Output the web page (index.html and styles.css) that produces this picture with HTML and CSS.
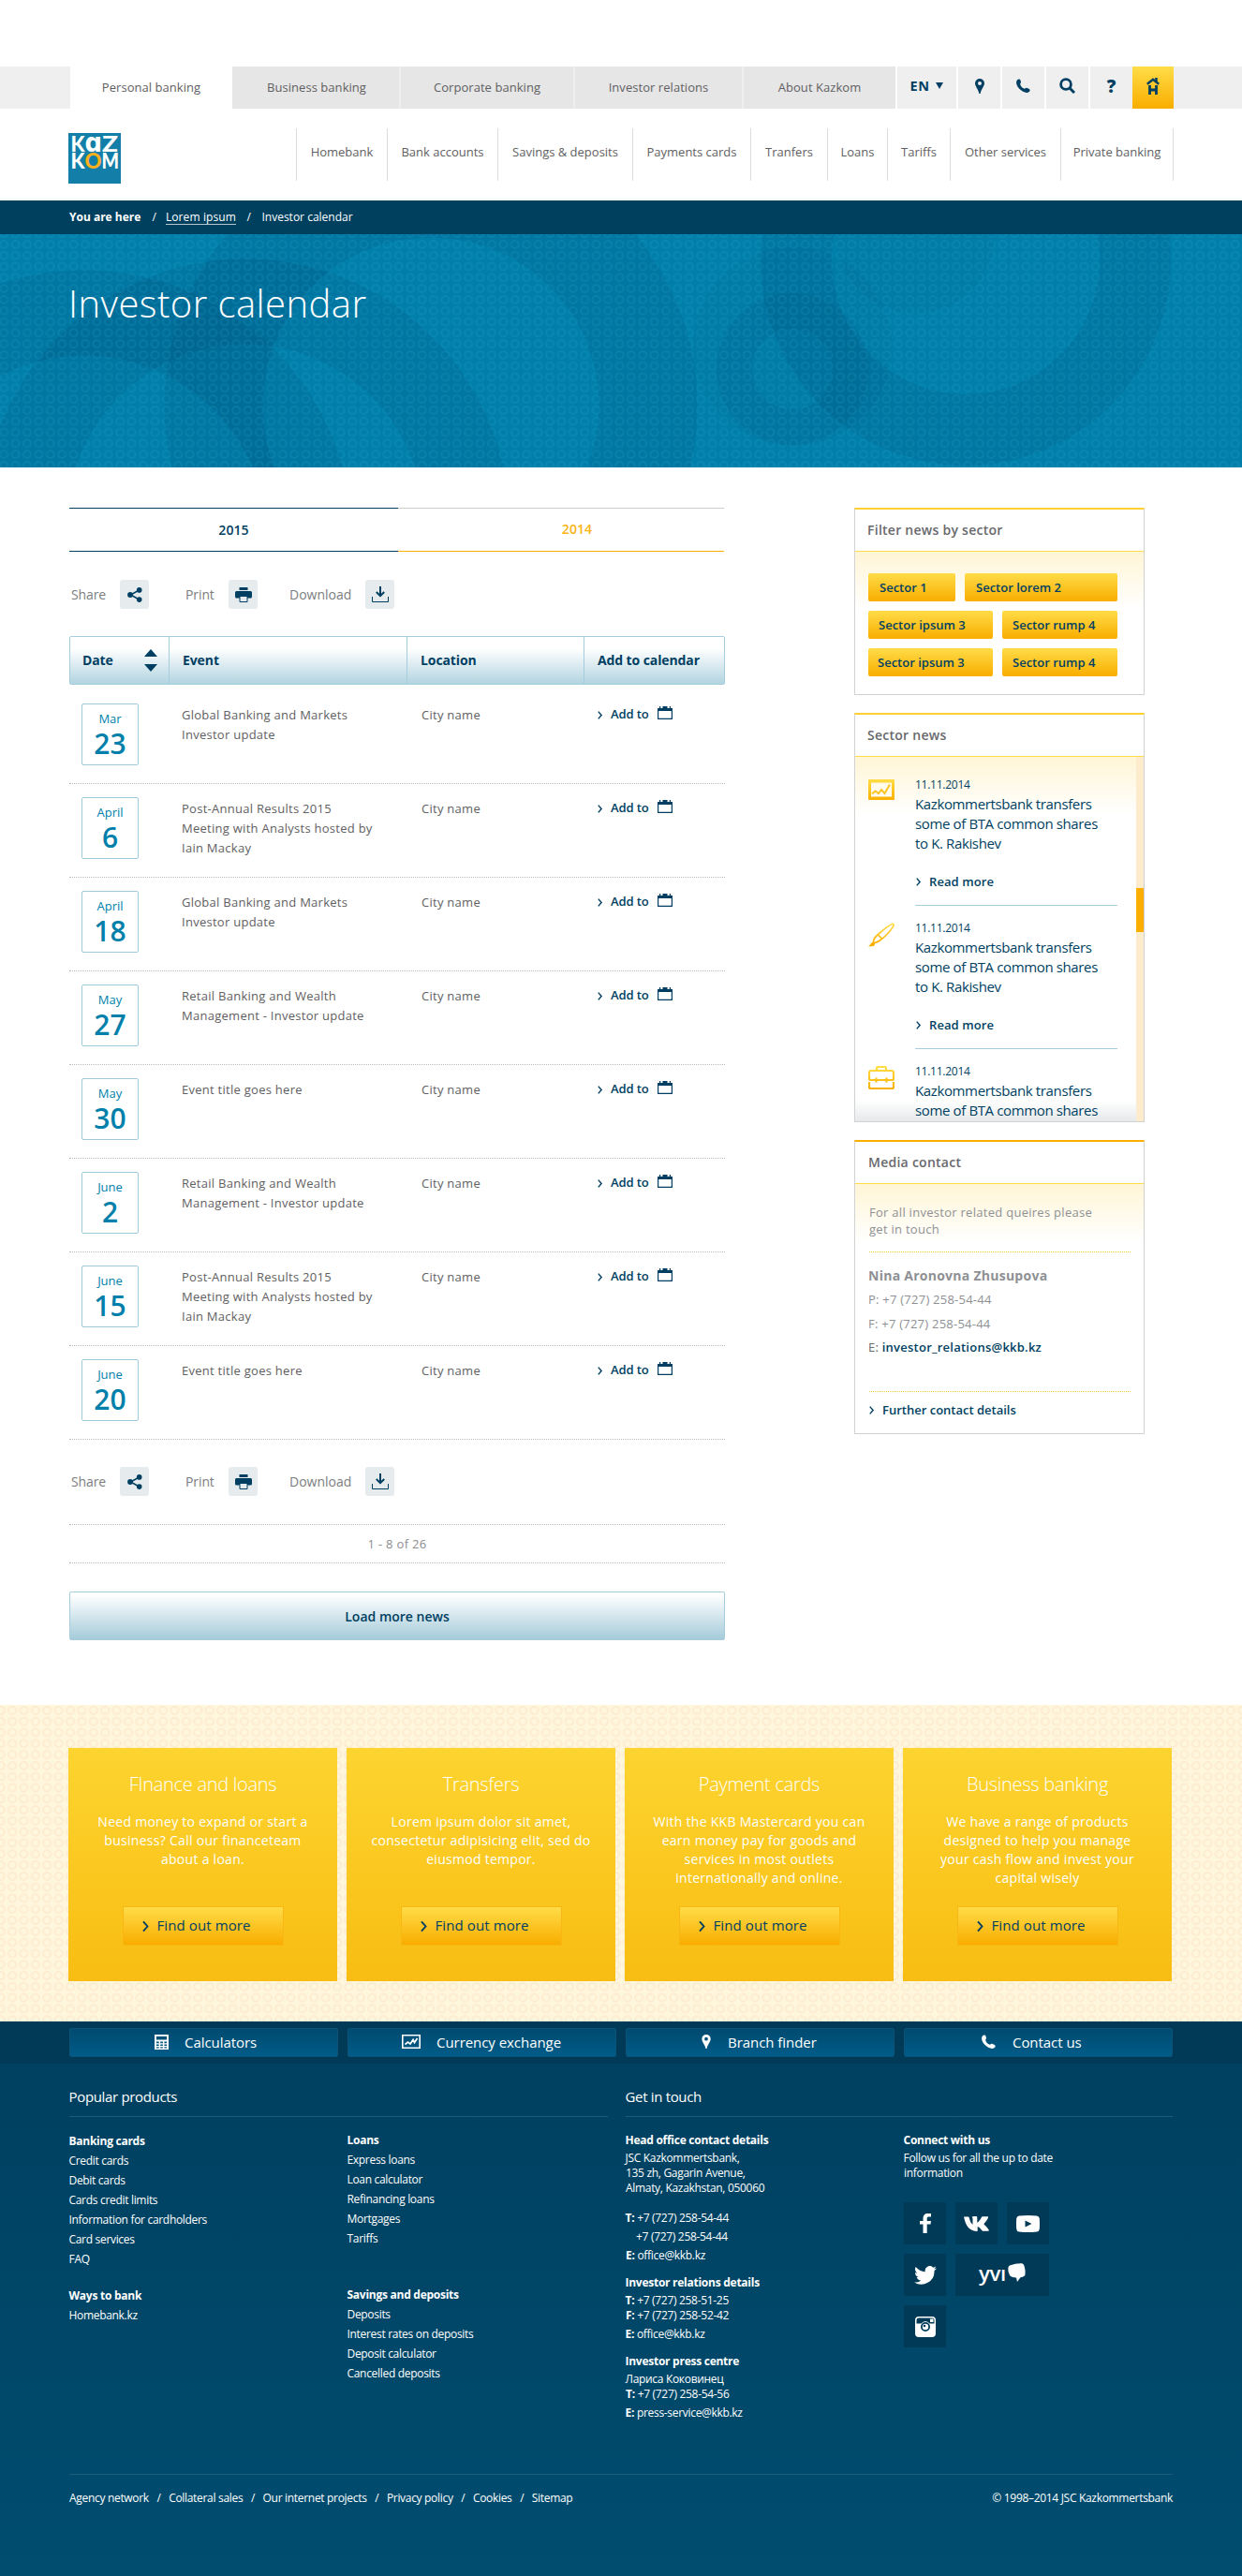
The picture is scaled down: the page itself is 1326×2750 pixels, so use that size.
FILE: index.html
```html
<!DOCTYPE html>
<html lang="en">
<head>
<meta charset="utf-8">
<title>Investor calendar</title>
<link rel="stylesheet" href="styles.css">
</head>
<body>
<svg class="defs" width="0" height="0" aria-hidden="true">
  <defs>
    <linearGradient id="gold" x1="0" y1="0" x2="0" y2="1"><stop offset="0" stop-color="#ffdd45"/><stop offset="1" stop-color="#fbb000"/></linearGradient>
    <symbol id="i-pin" viewBox="0 0 10 16"><path fill-rule="evenodd" d="M5 0a5 5 0 0 1 5 5c0 3-3.6 6.500-4.400 11H4.400C3.600 11.500 0 8 0 5a5 5 0 0 1 5-5zm0 3a2 2 0 1 0 0 4 2 2 0 0 0 0-4z"/></symbol>
    <symbol id="i-phone" viewBox="0 0 16 16"><path d="M1.200 1.400C2.600-.2 4.300.3 4.800 1.900l.5 1.900c.2 1-.9 1.600-.8 2.500.3 2 2.700 4.600 4.700 5.100.9.200 1.500-1.300 2.600-1l2.400 1.100c1.900.9 1.700 2.400.4 3.500-1.600 1.300-4.300 1.200-6.900-.3C3.500 12.300.3 8.300.1 4.600 0 3.300.4 2.200 1.200 1.400z"/></symbol>
    <symbol id="i-share" viewBox="0 0 16 16"><path d="M12.500 3 3.500 8l9 5" fill="none" stroke="currentColor" stroke-width="1.500"/><circle cx="12.700" cy="2.900" r="2.800"/><circle cx="3" cy="8" r="2.900"/><circle cx="12.700" cy="13.100" r="2.800"/></symbol>
    <symbol id="i-print" viewBox="0 0 18 16"><path d="M4.500 0h9v3h-9zM1.500 4h15A1.500 1.500 0 0 1 18 5.500V10a1.500 1.500 0 0 1-1.500 1.500h-15A1.500 1.500 0 0 1 0 10V5.500A1.500 1.500 0 0 1 1.500 4z"/><path d="M5 9.500h8v6H5z" fill="#e6ebee" stroke="currentColor"/></symbol>
    <symbol id="i-download" viewBox="0 0 18 17"><path d="M9 0v9M4.800 6 9 10.200 13.200 6" fill="none" stroke="currentColor" stroke-width="2"/><path d="M.5 11v5.500h17V11" fill="none" stroke="currentColor"/></symbol>
    <symbol id="i-cal" viewBox="0 0 16 14"><path d="M0 2h16v3H0z"/><path d="M5.500 0h5v3h-5zM2 0h1.200v3H2zM12.800 0H14v3h-1.200z"/><path d="M.6 3.500h14.800v9.900H.6z" fill="none" stroke="currentColor" stroke-width="1.200"/></symbol>
    <symbol id="i-chev" viewBox="0 0 8 12"><path d="M1 .8 5.500 6 1 11.200" fill="none" stroke="currentColor" stroke-width="1.900"/></symbol>
    <symbol id="i-chart" viewBox="0 0 20 15"><path d="M.8.800h18.400v13.400H.8z" fill="none" stroke="currentColor" stroke-width="1.600"/><path d="m3.500 10.500 3-2.500 2.500 2 3-4.500 1.500 3L16.500 4" fill="none" stroke="currentColor" stroke-width="1.700"/></symbol>
    <symbol id="i-calc" viewBox="0 0 15 16"><path fill-rule="evenodd" d="M0 0h15v16H0zM2 2v3.500h11V2zM2 7.500v1.800h2.700V7.500zm4.200 0v1.800h2.700V7.500zm4.200 0v1.800H13V7.500zM2 10.500v1.500h2.700v-1.500zm4.200 0v1.500h2.700v-1.500zm4.200 0v1.500H13v-1.500zM2 13.200v1.300h2.700v-1.300zm4.200 0v1.300h2.700v-1.300zm4.200 0v1.300H13v-1.300z"/></symbol>
  </defs>
</svg>

<header class="site-header">
  <div class="topbar">
    <nav class="segments">
      <a class="segment segment-active seg-a">Personal banking</a>
      <a class="segment seg-b">Business banking</a>
      <a class="segment seg-c">Corporate banking</a>
      <a class="segment seg-d">Investor relations</a>
      <a class="segment seg-e">About Kazkom</a>
    </nav>
    <div class="tools">
      <a class="tool tool-lang">EN<svg width="8" height="7" viewBox="0 0 8 7"><path d="M0 0h8L4 7z"/></svg></a>
      <a class="tool"><svg width="10" height="16"><use href="#i-pin"/></svg></a>
      <a class="tool"><svg width="15" height="15"><use href="#i-phone"/></svg></a>
      <a class="tool"><svg width="17" height="17" viewBox="0 0 17 17"><circle cx="7" cy="7" r="5.400" fill="none" stroke="currentColor" stroke-width="2.800"/><path d="m11 11 5 5" stroke="currentColor" stroke-width="3"/></svg></a>
      <a class="tool tool-help">?</a>
      <a class="tool tool-home"><svg width="14" height="18" viewBox="0 0 14 18"><path d="m.8 6.800 6.200-5 6.200 5" fill="none" stroke="currentColor" stroke-width="2.400"/><path d="M9.200 0h2.500v4H9.200z"/><path d="M3.500 8v10M10.500 8v10M3.500 13h7" fill="none" stroke="currentColor" stroke-width="2.800"/></svg></a>
    </div>
  </div>
  <div class="mainbar">
    <a class="logo">
      <svg width="56" height="54" viewBox="0 0 56 54">
        <rect width="56" height="54" fill="#137fa8"/>
        <g font-family="Lato, sans-serif" font-weight="900" font-size="22" fill="#fff">
          <text x="2.500" y="20" textLength="15" lengthAdjust="spacingAndGlyphs">K</text>
          <text x="17.500" y="20" font-family="DejaVu Sans" font-weight="700" font-size="28" textLength="18.500" lengthAdjust="spacingAndGlyphs">ɑ</text>
          <text x="36" y="20" textLength="17" lengthAdjust="spacingAndGlyphs">Z</text>
          <text x="2.500" y="37.500" textLength="15" lengthAdjust="spacingAndGlyphs">K</text>
          <text x="17.500" y="37.500" textLength="18" lengthAdjust="spacingAndGlyphs" fill="#fbb01c">O</text>
          <text x="35.500" y="37.500" textLength="18.500" lengthAdjust="spacingAndGlyphs">M</text>
        </g>
      </svg>
    </a>
    <nav class="mainnav">
      <a class="n1">Homebank</a><a class="n2">Bank accounts</a><a class="n3">Savings &amp; deposits</a><a class="n4">Payments cards</a><a class="n5">Tranfers</a><a class="n6">Loans</a><a class="n7">Tariffs</a><a class="n8">Other services</a><a class="n9">Private banking</a>
    </nav>
  </div>
</header>

<div class="crumbs"><b>You are here</b><i>/</i><a>Lorem ipsum</a><i>/</i><span>Investor calendar</span></div>

<section class="hero">
  <svg class="hero-art" width="1326" height="249" viewBox="0 250 1326 249">
    <defs>
      <pattern id="rings" width="12.400" height="11.800" patternUnits="userSpaceOnUse" x="-2" y="255">
        <rect width="12.400" height="11.800" fill="#003c64" fill-opacity=".05"/>
        <ellipse cx="6.200" cy="5.900" rx="4" ry="3.900" fill="none" stroke="#2ba3c9" stroke-opacity=".22" stroke-width="2"/>
      </pattern>
    </defs>
    <rect y="250" width="1326" height="249" fill="#0083af"/>
    <g fill="none" stroke="#004268" stroke-opacity=".14">
      <circle cx="460" cy="433" r="232" stroke-width="105"/>
      <circle cx="262" cy="558" r="236" stroke-width="91"/>
      <circle cx="90" cy="574" r="240" stroke-width="91"/>
      <circle cx="1031" cy="278" r="181" stroke-width="76"/>
      <circle cx="846" cy="394" r="62" stroke-width="38" stroke-opacity=".1"/>
    </g>
    <g fill="#004268" fill-opacity=".06">
      <circle cx="846" cy="370" r="106"/>
      <circle cx="977" cy="250" r="85"/>
    </g>
    <rect y="250" width="1326" height="249" fill="url(#rings)"/>
  </svg>
  <h1>Investor calendar</h1>
</section>

<main class="content">
  <div class="primary">
    <div class="years"><a class="year year-on">2015</a><a class="year">2014</a></div>
    <div class="actions">
      <span class="act act-share">Share</span><a class="box"><svg width="16" height="16"><use href="#i-share"/></svg></a>
      <span class="act act-print">Print</span><a class="box"><svg width="18" height="16"><use href="#i-print"/></svg></a>
      <span class="act act-down">Download</span><a class="box"><svg width="18" height="17"><use href="#i-download"/></svg></a>
    </div>
    <div class="thead">
      <span>Date<svg width="14" height="24" viewBox="0 0 14 24"><path d="M7 0l7 8H0zM7 24l7-8H0z"/></svg></span><span>Event</span><span>Location</span><span>Add to calendar</span>
    </div>
    <div class="rows">
      <div class="row"><div class="date">Mar<b>23</b></div><p>Global Banking and Markets<br>Investor update</p><p>City name</p><a class="add"><svg width="6" height="9"><use href="#i-chev"/></svg>Add to<svg class="cal" width="16" height="14"><use href="#i-cal"/></svg></a></div>
      <div class="row"><div class="date">April<b>6</b></div><p>Post-Annual Results 2015<br>Meeting with Analysts hosted by<br>Iain Mackay</p><p>City name</p><a class="add"><svg width="6" height="9"><use href="#i-chev"/></svg>Add to<svg class="cal" width="16" height="14"><use href="#i-cal"/></svg></a></div>
      <div class="row"><div class="date">April<b>18</b></div><p>Global Banking and Markets<br>Investor update</p><p>City name</p><a class="add"><svg width="6" height="9"><use href="#i-chev"/></svg>Add to<svg class="cal" width="16" height="14"><use href="#i-cal"/></svg></a></div>
      <div class="row"><div class="date">May<b>27</b></div><p>Retail Banking and Wealth<br>Management - Investor update</p><p>City name</p><a class="add"><svg width="6" height="9"><use href="#i-chev"/></svg>Add to<svg class="cal" width="16" height="14"><use href="#i-cal"/></svg></a></div>
      <div class="row"><div class="date">May<b>30</b></div><p>Event title goes here</p><p>City name</p><a class="add"><svg width="6" height="9"><use href="#i-chev"/></svg>Add to<svg class="cal" width="16" height="14"><use href="#i-cal"/></svg></a></div>
      <div class="row"><div class="date">June<b>2</b></div><p>Retail Banking and Wealth<br>Management - Investor update</p><p>City name</p><a class="add"><svg width="6" height="9"><use href="#i-chev"/></svg>Add to<svg class="cal" width="16" height="14"><use href="#i-cal"/></svg></a></div>
      <div class="row"><div class="date">June<b>15</b></div><p>Post-Annual Results 2015<br>Meeting with Analysts hosted by<br>Iain Mackay</p><p>City name</p><a class="add"><svg width="6" height="9"><use href="#i-chev"/></svg>Add to<svg class="cal" width="16" height="14"><use href="#i-cal"/></svg></a></div>
      <div class="row"><div class="date">June<b>20</b></div><p>Event title goes here</p><p>City name</p><a class="add"><svg width="6" height="9"><use href="#i-chev"/></svg>Add to<svg class="cal" width="16" height="14"><use href="#i-cal"/></svg></a></div>
    </div>
    <div class="actions actions-bottom">
      <span class="act act-share">Share</span><a class="box"><svg width="16" height="16"><use href="#i-share"/></svg></a>
      <span class="act act-print">Print</span><a class="box"><svg width="18" height="16"><use href="#i-print"/></svg></a>
      <span class="act act-down">Download</span><a class="box"><svg width="18" height="17"><use href="#i-download"/></svg></a>
    </div>
    <div class="pager">1 - 8 of 26</div>
    <a class="load">Load more news</a>
  </div>

  <aside class="side">
    <section class="panel panel-filter">
      <h2>Filter news by sector</h2>
      <div class="panel-body tags">
        <a class="t1">Sector 1</a><a class="t2">Sector lorem 2</a>
        <a class="t3">Sector ipsum 3</a><a class="t4">Sector rump 4</a>
        <a class="t3 t5">Sector ipsum 3</a><a class="t4">Sector rump 4</a>
      </div>
    </section>
    <section class="panel panel-news">
      <h2>Sector news</h2>
      <div class="panel-body news">
        <div class="fade"></div>
        <div class="news-list">
          <article>
            <svg width="28" height="22" viewBox="0 0 28 22"><path fill="url(#gold)" fill-rule="evenodd" d="M1 0h26a1 1 0 0 1 1 1v20a1 1 0 0 1-1 1H1a1 1 0 0 1-1-1V1a1 1 0 0 1 1-1zm2 3.500v15h22v-15z"/><path d="m4 15.500 3.500-3 3.500 2.500 3-4 3.500 4L23 5.500" fill="none" stroke="#fdc425" stroke-width="2"/></svg>
            <div class="item"><time>11.11.2014</time><p>Kazkommertsbank transfers<br>some of BTA common shares<br>to K. Rakishev</p><a><svg width="6" height="9"><use href="#i-chev"/></svg>Read more</a></div>
          </article>
          <article>
            <svg width="28" height="26" viewBox="0 0 28 26"><path d="M5.500 21.500c-.5-2.500 1.500-6 5-9C15 8.500 22 2.500 25.500 1.500c2-.5 2 1 1 2.700C24.500 8 18 15 13 18.500c-3 2-5.500 3.300-7.500 3zM10.500 13l4 4" fill="none" stroke="url(#gold)" stroke-width="1.700"/><path d="M0 25.500c2-1 2.500-5 5.500-4.500 2 .5 1.500 3 .5 4z" fill="#fbb000"/></svg>
            <div class="item"><time>11.11.2014</time><p>Kazkommertsbank transfers<br>some of BTA common shares<br>to K. Rakishev</p><a><svg width="6" height="9"><use href="#i-chev"/></svg>Read more</a></div>
          </article>
          <article>
            <svg width="28" height="25" viewBox="0 0 28 25"><path d="M9 5V2.500Q9 1 10.500 1h7Q19 1 19 2.500V5M1 13.500V7q0-2 2-2h22q2 0 2 2v6.500q0 1.500-1.500 1.500h-23Q1 15 1 13.500zM1 17v5.500Q1 24 2.500 24h23q1.500 0 1.500-1.500V17M8.500 12.500v5M19.500 12.500v5" fill="none" stroke="url(#gold)" stroke-width="2.200"/></svg>
            <div class="item"><time>11.11.2014</time><p>Kazkommertsbank transfers<br>some of BTA common shares</p></div>
          </article>
        </div>
        <div class="track"><div class="thumb"></div></div>
      </div>
    </section>
    <section class="panel panel-contact">
      <h2>Media contact</h2>
      <div class="panel-body contact">
        <p class="lead">For all investor related queires please<br>get in touch</p>
        <div class="person"><strong>Nina Aronovna Zhusupova</strong><span><em>P:</em> +7 (727) 258-54-44</span><span><em>F:</em> +7 (727) 258-54-44</span><span class="mail"><em>E:</em> <a>investor_relations@kkb.kz</a></span></div>
        <a class="more"><svg width="6" height="9"><use href="#i-chev"/></svg>Further contact details</a>
      </div>
    </section>
  </aside>
</main>

<section class="promo">
  <div class="card"><h3>FInance and loans</h3><p>Need money to expand or start a<br>business? Call our financeteam<br>about a loan.</p><a><svg width="8" height="13"><use href="#i-chev"/></svg>Find out more</a></div>
  <div class="card"><h3>Transfers</h3><p>Lorem ipsum dolor sit amet,<br>consectetur adipisicing elit, sed do<br>eiusmod tempor.</p><a><svg width="8" height="13"><use href="#i-chev"/></svg>Find out more</a></div>
  <div class="card"><h3>Payment cards</h3><p>With the KKB Mastercard you can<br>earn money pay for goods and<br>services in most outlets<br>internationally and online.</p><a><svg width="8" height="13"><use href="#i-chev"/></svg>Find out more</a></div>
  <div class="card"><h3>Business banking</h3><p>We have a range of products<br>designed to help you manage<br>your cash flow and invest your<br>capital wisely</p><a><svg width="8" height="13"><use href="#i-chev"/></svg>Find out more</a></div>
</section>

<footer>
  <div class="quick">
    <a class="q1"><svg width="15" height="16"><use href="#i-calc"/></svg>Calculators</a>
    <a class="q2"><svg width="20" height="15"><use href="#i-chart"/></svg>Currency exchange</a>
    <a class="q3"><svg width="10" height="15"><use href="#i-pin"/></svg>Branch finder</a>
    <a class="q4"><svg width="15" height="15"><use href="#i-phone"/></svg>Contact us</a>
  </div>
  <div class="foot">
    <div class="foot-heads"><h2 class="h-left">Popular products</h2><h2 class="h-right">Get in touch</h2></div>
    <div class="foot-cols">
      <div class="col col-first">
        <ul><li><b>Banking cards</b></li><li>Credit cards</li><li>Debit cards</li><li>Cards credit limits</li><li>Information for cardholders</li><li>Card services</li><li>FAQ</li></ul>
        <ul class="second"><li><b>Ways to bank</b></li><li>Homebank.kz</li></ul>
      </div>
      <div class="col">
        <ul class="tall"><li><b>Loans</b></li><li>Express loans</li><li>Loan calculator</li><li>Refinancing loans</li><li>Mortgages</li><li>Tariffs</li></ul>
        <ul class="second"><li><b>Savings and deposits</b></li><li>Deposits</li><li>Interest rates on deposits</li><li>Deposit calculator</li><li>Cancelled deposits</li></ul>
      </div>
      <div class="col office">
        <h4>Head office contact details</h4>
        <p>JSC Kazkommertsbank,<br>135 zh, Gagarin Avenue,<br>Almaty, Kazakhstan, 050060</p>
        <p class="phones"><b>T:</b> +7 (727) 258-54-44<br><span class="indent">+7 (727) 258-54-44</span><br><b>E:</b> office@kkb.kz</p>
        <h4>Investor relations details</h4>
        <p><b>T:</b> +7 (727) 258-51-25<br><b>F:</b> +7 (727) 258-52-42</p>
        <p class="email"><b>E:</b> office@kkb.kz</p>
        <h4>Investor press centre</h4>
        <p>Лариса Коковинец<br><b>T:</b> +7 (727) 258-54-56</p>
        <p class="email"><b>E:</b> press-service@kkb.kz</p>
      </div>
      <div class="col office connect">
        <h4>Connect with us</h4>
        <p>Follow us for all the up to date<br>information</p>
        <div class="social">
          <a><svg width="12" height="21" viewBox="0 0 12 21"><path d="M3.500 21V11.500H0V8h3.500V5.500C3.500 2 5.300 0 8.500 0H12v3.500H9.500C8 3.500 7.700 4.200 7.700 5.500V8H12l-.5 3.500H7.700V21z"/></svg></a>
          <a><svg width="27" height="16" viewBox="0 0 27 16"><path d="M14.500 16C6.500 16 2 10.500.2 1.200L0 .5h4.500c.8 0 1 .3 1.200 1C6.500 5 8 8 9.500 8.800V2.500C9.400 1.500 9 1.200 8.500.8 9.500 0 11.500 0 13 .1c1 .1 1.300.4 1.300 1.600v5c1.500-.5 3.500-3.400 4.500-5.500.2-.6.600-.9 1.200-.9H25c1 0 1.200.4 1 1.100-.7 2-2.500 4.200-4.200 6.200-.4.500-.3.800.1 1.300 1.800 1.700 3.600 3.400 4.600 5.300.5.900.2 1.600-.9 1.600H21c-.8 0-1.200-.3-1.700-.9-1.500-1.800-3.200-3.900-4.600-4v3.400c0 1-.1 1.700-.2 1.700z"/></svg></a>
          <a><svg width="25" height="18" viewBox="0 0 25 18"><path fill-rule="evenodd" d="M3 .5Q12.500-.5 22 .5q2.600.3 2.800 3 .4 5.500 0 11-.2 2.700-2.800 3-9.500 1-19 0-2.600-.3-2.800-3-.4-5.500 0-11Q.4.800 3 .5zM9.500 5.500v7l7-3.500z"/></svg></a>
          <a><svg width="24" height="20" viewBox="0 0 24 20"><path d="M24 2.400a10 10 0 0 1-2.800.8A5 5 0 0 0 23.300.5a10 10 0 0 1-3.100 1.200 4.900 4.900 0 0 0-8.400 4.500A14 14 0 0 1 1.700 1a4.900 4.900 0 0 0 1.500 6.600A4.900 4.900 0 0 1 1 7v.1a4.900 4.900 0 0 0 3.900 4.800 5 5 0 0 1-2.200.1 4.900 4.900 0 0 0 4.600 3.400A9.900 9.900 0 0 1 0 17.500 14 14 0 0 0 21.500 5.000 10 10 0 0 0 24 2.400z"/></svg></a>
          <a class="wide"><svg width="50" height="30" viewBox="0 -2 50 30"><text x="0" y="19" font-family="Open Sans, sans-serif" font-weight="600" font-size="21" textLength="29" lengthAdjust="spacingAndGlyphs">yvı</text><path d="M33 2.500Q40 0 46 .3q2 .2 2.700 3.200 1.300 4.500.8 8.500-.2 2.500-5 3.300L41 20l-1-4.500q-5.500-.5-7-2.500-2-3.500-1.700-7.500.2-2.300 1.700-3z"/></svg></a>
          <a><svg width="22" height="22" viewBox="0 0 22 22"><path fill-rule="evenodd" d="M4 0h14q4 0 4 4v14q0 4-4 4H4q-4 0-4-4V4q0-4 4-4zM4 1.500Q1.500 1.500 1.500 4v3.500h5Q8.500 5 11 5q2.600 0 4.500 2.500h5V4q0-2.500-2.500-2.500zM11 6a5 5 0 1 0 0 10 5 5 0 0 0 0-10zm0 1.800a3.200 3.200 0 1 1 0 6.400 3.200 3.200 0 0 1 0-6.400z"/><path d="M16 2.500h3.500V6H16z"/><circle cx="10" cy="10" r="1.300" fill="#003f60"/></svg></a>
        </div>
      </div>
    </div>
    <div class="legal">
      <nav><a>Agency network</a><i>/</i><a>Collateral sales</a><i>/</i><a>Our internet projects</a><i>/</i><a>Privacy policy</a><i>/</i><a>Cookies</a><i>/</i><a>Sitemap</a></nav>
      <span>© 1998–2014 JSC Kazkommertsbank</span>
    </div>
  </div>
</footer>
</body>
</html>
```
FILE: styles.css
```css
* { box-sizing: border-box; }
body, h1, h2, h3, h4, p, ul { margin: 0; padding: 0; }
body { width: 1326px; background: #fff; font: 13px/20px "Open Sans", sans-serif; color: #5f6062; overflow-x: hidden; }
ul { list-style: none; }
svg { display: block; fill: currentColor; flex: none; }
.logo svg, .wide svg { overflow: visible; }
.defs { position: absolute; }
i, em { font-style: normal; }

/* header */
.site-header { height: 214px; padding-top: 71px; }
.topbar { display: flex; height: 45px; background: #efefef; padding-left: 75px; }
.segments { display: flex; gap: 2px; background: #efefef; }
.segment { display: flex; align-items: center; justify-content: center; background: #e6e6e6; letter-spacing: .05px; height: 45px; padding-bottom: 1px; }
.segment-active { background: #fff; margin-right: -2px; }
.seg-a { width: 173px; } .seg-b { width: 178px; padding-left: 2px; } .seg-c { width: 184px; } .seg-d { width: 178px; } .seg-e { width: 162px; }
.tools { display: flex; gap: 2px; background: #fff; padding-left: 2px; color: #003f62; }
.tool { display: flex; align-items: center; justify-content: center; width: 45px; background: #efefef; padding-bottom: 4px; }
.tool-lang { width: 63px; font-size: 14.500px; font-weight: 700; letter-spacing: .5px; gap: 7px; }
.tool-help { font-size: 19px; font-weight: 800; }
.tool-home { width: 44px; margin-left: -2px; background: linear-gradient(#ffdd48, #f9ad00); padding-bottom: 3px; }
.mainbar { display: flex; height: 98px; padding-left: 73px; }
.logo { width: 56px; margin-top: 26px; }
.mainnav { display: flex; margin: 21px 0 0 187px; height: 56px; border-right: 1px solid #dcdcdc; }
.mainnav a { border-left: 1px solid #dcdcdc; text-align: center; line-height: 50px; white-space: nowrap; }
.n1 { width: 97px; } .n2 { width: 118px; } .n3 { width: 144px; } .n4 { width: 126px; } .n5 { width: 82px; }
.n6 { width: 64px; } .n7 { width: 67px; } .n8 { width: 118px; } .n9 { width: 120px; }

/* breadcrumbs and title */
.crumbs { display: flex; align-items: center; height: 36px; background: #00405f; color: #fff; padding: 0 0 1px 74px; font-size: 12px; }
.crumbs i { width: 26.600px; text-align: center; }
.crumbs i:nth-of-type(1) { padding-left: 2px; }
.crumbs i:nth-of-type(2) { width: 27.500px; }
.crumbs a { border-bottom: 1px solid #b5c8d2; line-height: 15px; letter-spacing: .1px; }
.hero { position: relative; height: 249px; }
.hero-art { position: absolute; left: 0; top: 0; }
.hero h1 { position: relative; padding: 50px 0 0 73px; font-size: 40px; line-height: 48px; font-weight: 300; letter-spacing: .45px; color: #fff; }

/* page body */
.content { display: flex; height: 1321px; padding: 43px 0 0 74px; }
.primary { width: 700px; }
.side { width: 310px; margin-left: 138px; }
.years { display: flex; height: 47px; font-size: 14px; font-weight: 600; text-align: center; line-height: 45px; }
.year { width: 348px; border-top: 1px solid #ccc; border-bottom: 1px solid #fbb000; color: #fbb315; padding: 0 0 0 34px; line-height: 43px; letter-spacing: .1px; }
.year-on { width: 351px; border-color: #00405f; color: #00405f; padding-left: 0; line-height: 45px; }
.actions { display: flex; height: 31px; margin: 30px 0 29px; font-size: 14px; line-height: 31px; color: #7b7d80; }
.actions-bottom { margin: 29px 0 30px; }
.act { padding-left: 2px; width: 54px; letter-spacing: -.1px; }
.act-print { padding-left: 39px; width: 85px; }
.act-down { padding-left: 34px; width: 115px; letter-spacing: 0; }
.box { display: flex; align-items: center; justify-content: center; width: 31px; height: 31px; border-radius: 3px; background: #e6ebee; color: #003f62; }
.thead { display: grid; grid-template-columns: 106px 254px 189px 151px; height: 52px; border: 1px solid #a5cddd; border-radius: 2px; background: linear-gradient(#fff 25%, #b2d4e0); font-size: 14px; font-weight: 700; line-height: 50px; color: #003f62; }
.thead span { padding-left: 14px; display: flex; justify-content: space-between; align-items: center; border-right: 1px solid #a5cddd; letter-spacing: -.1px; }
.thead span:first-child { padding: 0 12px 0 13px; }
.thead span:last-child { border: 0; }
.rows { margin-top: 6px; }
.row { display: grid; grid-template-columns: 120px 256px 188px 136px; height: 100px; padding-top: 14px; border-bottom: 1px dotted #bbb; align-items: start; }
.row p { padding-top: 2px; line-height: 21px; letter-spacing: .27px; }
.date { width: 61px; height: 66px; margin-left: 13px; border: 1px solid #9ecadb; border-radius: 2px; text-align: center; font-weight: 500; color: #007fab; line-height: 22px; padding-top: 4px; }
.date b { display: block; font-size: 30px; line-height: 32px; font-weight: 600; }
.add, .item a, .more { display: flex; align-items: center; font-weight: 600; color: #003f62; }
.add { line-height: 21px; padding-top: 1px; letter-spacing: -.1px; }
.add svg:first-child { margin: 1px 8px 0 0; }
.add .cal { margin: -4px 0 0 9px; }
.pager { height: 42px; border: dotted #bbb; border-width: 1px 0; text-align: center; line-height: 41px; letter-spacing: .3px; color: #8b8d90; }
.load { display: block; margin-top: 30px; height: 52px; border: 1px solid #a5cddd; border-radius: 2px; background: linear-gradient(#fff 5%, #a5cbda); text-align: center; font-size: 14px; font-weight: 600; line-height: 51px; color: #003f62; }

/* sidebar panels */
.panel { position: relative; margin-bottom: 19px; border: 1px solid #cfd1d3; border-top: 2px solid #ffd034; }
.panel h2 { height: 45px; padding-left: 13px; border-bottom: 1px solid #ffdc48; font-size: 14px; font-weight: 600; line-height: 44px; letter-spacing: .26px; color: #68696c; }
.panel-body { background: linear-gradient(#fff5d6, #fff 62px); }
.panel-filter { height: 200px; }
.panel-news { height: 437px; }
.panel-contact { height: 314px; border-top-color: #fbae00; }
.panel-contact h2 { padding-left: 14px; }
.tags { display: flex; flex-wrap: wrap; gap: 10px; padding: 23px 28px 19px 14px; align-content: start; }
.tags a { height: 30px; padding-left: 12px; border-radius: 2px; background: linear-gradient(#ffdc48, #f9ad00); font-weight: 600; line-height: 30px; color: #003f62; }
.tags .t1 { width: 93px; } .tags .t2 { width: 163px; }
.tags .t3 { width: 133px; padding-left: 11px; } .tags .t4 { width: 123px; padding-left: 11px; } .tags .t5 { padding-left: 10px; }
.news { position: relative; height: 389px; overflow: hidden; padding: 6px 0 0 14px; }
.news-list { position: relative; color: #003f62; }
article { display: flex; padding-top: 14px; }
article > svg { margin-top: 4px; }
.item { width: 216px; margin-left: 22px; border-bottom: 1px solid #a5cddd; padding-bottom: 15px; }
article:last-child .item { border: 0; padding: 0; }
.item time { display: block; font-size: 12px; letter-spacing: -.26px; }
.item p { font-size: 15px; line-height: 21px; letter-spacing: -.37px; white-space: nowrap; }
.item a { margin-top: 20px; letter-spacing: .08px; }
.item a svg, .more svg { margin: 1px 8px 0 1px; }
.track { position: absolute; right: 0; top: 0; width: 8px; height: 100%; background: #fdeccb; padding-top: 140px; z-index: 1; }
.thumb { height: 47px; background: #fbae00; }
.fade { position: absolute; left: 0; right: 0; bottom: 0; height: 22px; background: linear-gradient(rgba(225,228,231,0), rgba(225,228,231,.85)); }
.contact { padding: 21px 14px 0 15px; color: #8e9094; }
.lead { line-height: 18px; letter-spacing: .28px; padding-bottom: 15px; border-bottom: 1px dotted #f5cf2e; white-space: nowrap; }
.person { display: flex; flex-direction: column; height: 149px; padding-top: 12px; line-height: 25.800px; letter-spacing: .24px; border-bottom: 1px dotted #f5cf2e; }
.person strong { font-size: 14px; letter-spacing: .26px; }
.person > * { margin-left: -1px; }
.person em { font-weight: 500; }
.mail { color: #68696c; }
.mail a { font-weight: 600; color: #003f62; }
.more { height: 38px; margin-left: -1px; }

/* promo cards */
.promo { display: flex; gap: 10px; height: 338px; padding: 46px 0 0 73px; background: radial-gradient(ellipse at center, #fff6de 2.700px, #fdeccf 3.500px, #fdeccf 4.700px, #fff6de 5.500px) -5.500px 0 / 12.400px 11.800px; }
.card { display: flex; flex-direction: column; align-items: center; width: 287px; height: 249px; padding: 24px 0 38px; background: linear-gradient(#fdd430, #f8bd12); color: #fff; text-align: center; }
.card h3 { font-size: 20px; line-height: 30px; font-weight: 350; letter-spacing: -.28px; }
.card p { margin-top: 15px; font-size: 14px; letter-spacing: .28px; white-space: nowrap; }
.card a { display: flex; align-items: center; width: 172px; height: 42px; margin-top: auto; padding: 0 0 2px 20px; border: 1px solid #f9b715; background: linear-gradient(#ffdc48, #f9ad00); color: #003f62; font-size: 15px; letter-spacing: .1px; }
.card a svg { margin: 2px 8px 0 0; }

/* footer */
.quick { display: flex; gap: 10px; height: 45px; padding: 7px 0 0 74px; background: #003a57; color: #fff; }
.quick a { display: flex; align-items: center; width: 287px; height: 31px; border: 1px solid #0c5378; border-radius: 2px; background: linear-gradient(#004a70, #005c88); font-size: 15px; letter-spacing: -.05px; padding-bottom: 2px; }
.quick .q1 { padding-left: 90px; gap: 17px; } .quick .q2 { padding-left: 57px; gap: 17px; } .quick .q3 { padding-left: 80px; gap: 18px; } .quick .q4 { padding-left: 82px; gap: 18px; }
.foot { height: 547px; padding: 0 74px; background: linear-gradient(#004060, #004d70); color: #fff; font-size: 12px; letter-spacing: -.31px; }
.foot b, .foot h4 { font-weight: 700; letter-spacing: -.26px; }
.foot-heads { display: flex; justify-content: space-between; padding-top: 16px; }
.foot-heads h2 { font-size: 15px; font-weight: 400; line-height: 38px; height: 41px; border-bottom: 1px solid #205a79; letter-spacing: -.33px; }
.foot-heads h2, .foot-cols .col { text-indent: -.5px; }
.h-left { width: 575px; } .h-right { width: 584px; }
.foot-cols { display: grid; grid-template-columns: 297px 297px 297px 287px; height: 381px; padding-top: 14px; }
.foot-cols li { line-height: 21px; }
.col-first { padding-top: 1px; }
.second { margin-top: 18px; }
.tall { height: 147px; }
.office { line-height: 16px; }
.office h4 { font-size: 12px; line-height: 21px; padding-bottom: 1px; }
.office p + h4 { margin-top: 8px; }
.phones { margin-top: 14px; line-height: 20px; }
.indent { padding-left: 11px; }
.email { margin-top: 2px; line-height: 20px; }
.social { display: flex; flex-wrap: wrap; gap: 10px; width: 160px; margin-top: 23px; text-indent: 0; }
.social a { display: flex; align-items: center; justify-content: center; width: 45px; height: 45px; background: #003a57; }
.social .wide { width: 100px; }
.legal { display: flex; justify-content: space-between; border-top: 1px solid #205a79; line-height: 50px; height: 60px; }
.legal nav { display: flex; }
.legal i { width: 21.300px; text-align: center; }
```
